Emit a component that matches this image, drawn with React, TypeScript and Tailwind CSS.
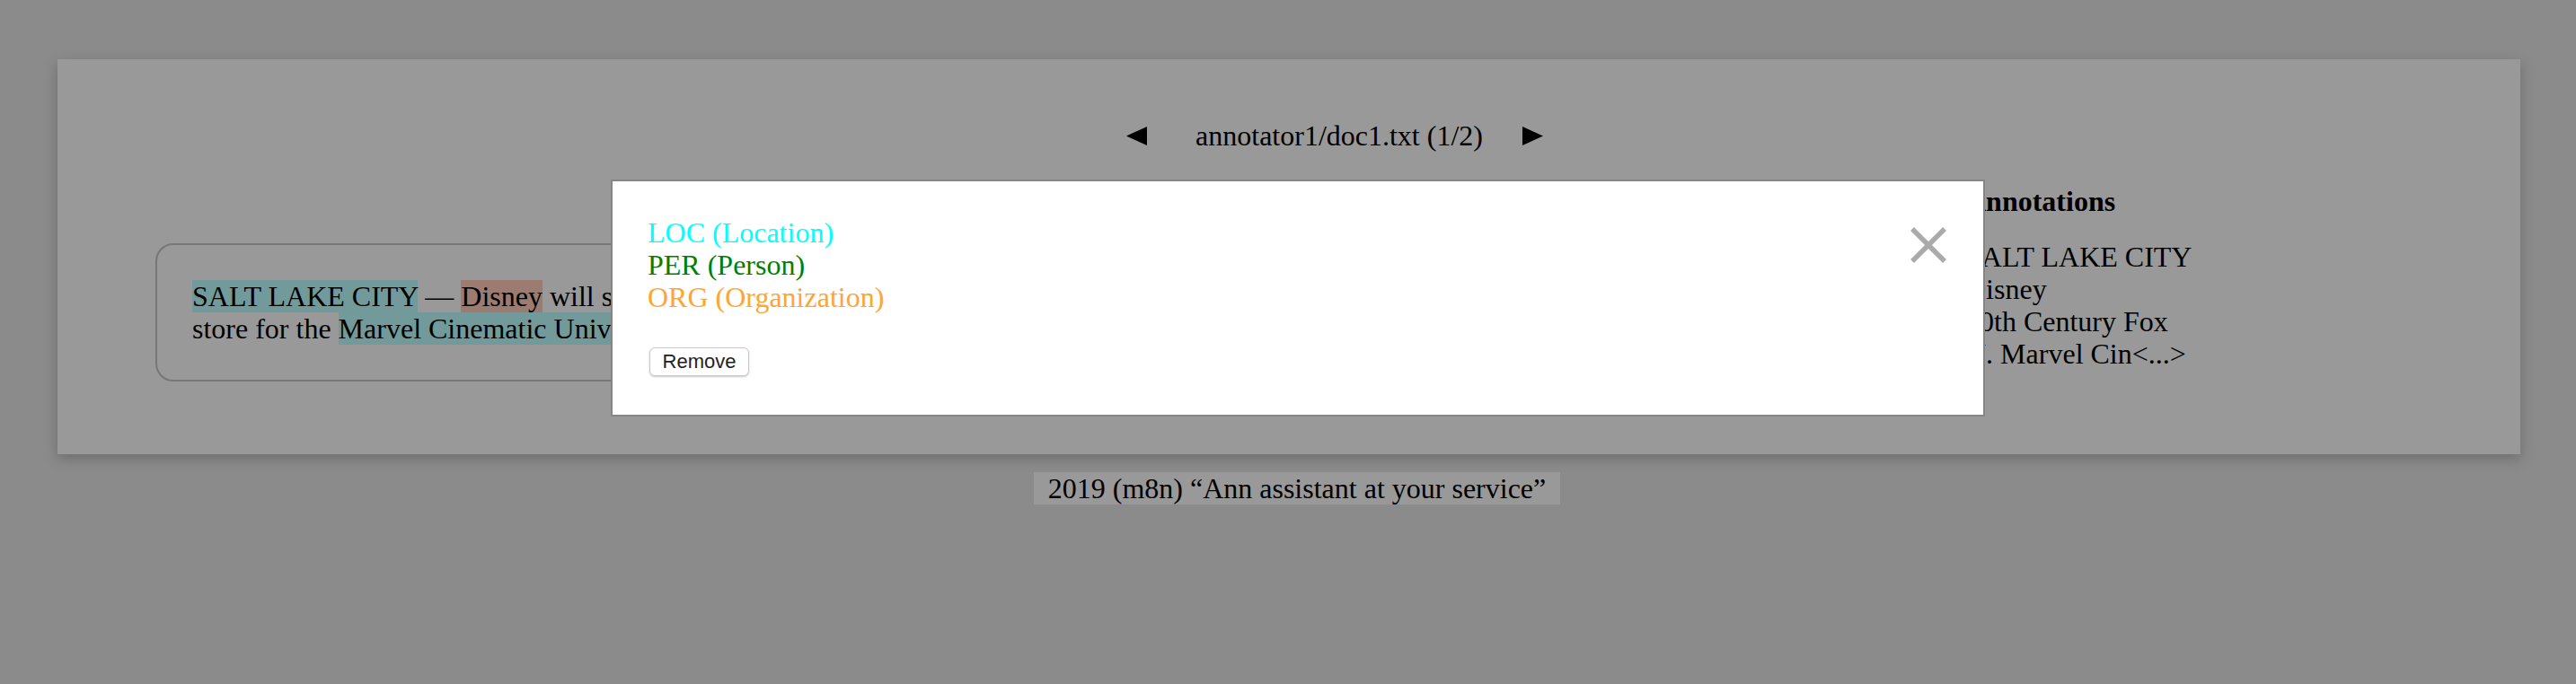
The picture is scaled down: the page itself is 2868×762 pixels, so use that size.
import { useState } from 'react';

const annotations = ['SALT LAKE CITY', 'Disney', '20th Century Fox', 'U. Marvel Cin<...>'];

const labels = [
  { name: 'LOC (Location)', color: 'text-[#00ffff]' },
  { name: 'PER (Person)', color: 'text-[#008000]' },
  { name: 'ORG (Organization)', color: 'text-[#ffa532]' },
];

export default function App() {
  const [open, setOpen] = useState(true);

  return (
    <div className="relative min-h-[762px] bg-[#8b8b8b] pt-[66px] font-['Liberation_Serif','Times_New_Roman',serif] text-[32px] leading-[36px] text-black">
      <div className="ml-[64px] mr-[62px] h-[440px] bg-[#999999] pt-[67px] shadow-[0_5px_14px_rgba(0,0,0,0.22)]">
        <nav className="flex items-center justify-center pl-[102px]">
          <button aria-label="Previous document">
            <svg width="23" height="21" viewBox="0 0 23 21">
              <polygon points="23,0 0,10.5 23,21" fill="#000" />
            </svg>
          </button>
          <span className="ml-[54px] mr-[44px]">annotator1/doc1.txt (1/2)</span>
          <button aria-label="Next document">
            <svg width="23" height="21" viewBox="0 0 23 21">
              <polygon points="0,0 23,10.5 0,21" fill="#000" />
            </svg>
          </button>
        </nav>

        <div className="flex items-start pl-[109px]">
          <div className="mt-[102px] w-[1957px] rounded-[20px] border-2 border-[#777777] p-[39px]">
            <span className="bg-[#729a9a]">SALT LAKE CITY</span> — <span className="bg-[#9c7b70]">Disney</span> will sell
            its stake in <span className="bg-[#9c7b70]">20th Century Fox</span> and open a new flagship
            <br />
            store for the <span className="bg-[#729a9a]">Marvel Cinematic Universe</span> in downtown Salt Lake City.
          </div>

          <div className="ml-[58px] mt-[37px]">
            <h3 className="font-bold">Annotations</h3>
            <ul className="mt-[26px]">
              {annotations.map((a) => (
                <li key={a} className="whitespace-nowrap">
                  {a}
                </li>
              ))}
            </ul>
          </div>
        </div>
      </div>

      <footer className="mt-[20px] flex justify-center pl-[20px]">
        <span className="bg-[#999999] px-[16px]">2019 (m8n) “Ann assistant at your service”</span>
      </footer>

      {open && (
        <div className="absolute left-[680px] top-[200px] h-[264px] w-[1530px] border-2 border-[#858585] bg-white p-[39px]">
          {labels.map((l) => (
            <div key={l.name} className={l.color}>
              {l.name}
            </div>
          ))}
          <button className="ml-[2px] mt-[38px] h-[32px] w-[111px] rounded-[6px] border border-[#c9c9c9] bg-white font-['Liberation_Sans',Arial,sans-serif] text-[22px] leading-[30px] text-[#222222] shadow-[0_1px_2px_rgba(0,0,0,0.22)]">
            Remove
          </button>
          <button
            aria-label="Close"
            onClick={() => setOpen(false)}
            className="absolute right-[41px] top-[51px]"
          >
            <svg width="40" height="40" viewBox="0 0 40 40">
              <line x1="2" y1="2" x2="38" y2="38" stroke="#aaaaaa" strokeWidth="5.5" />
              <line x1="38" y1="2" x2="2" y2="38" stroke="#aaaaaa" strokeWidth="5.5" />
            </svg>
          </button>
        </div>
      )}
    </div>
  );
}
